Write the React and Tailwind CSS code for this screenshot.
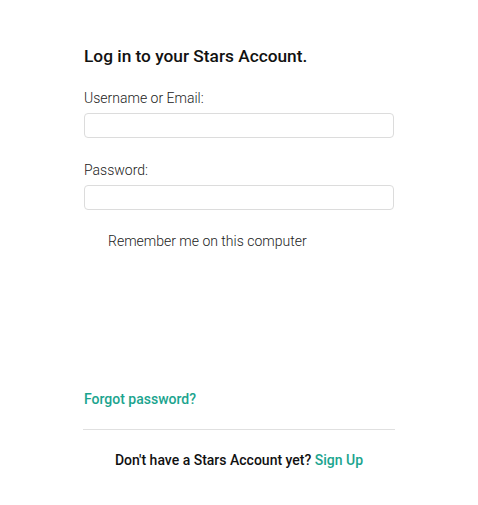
export default function App() {
  return (
    <div className="min-h-[505px] w-[478px] bg-white" style={{ fontFamily: "Roboto, 'Liberation Sans', sans-serif" }}>
      <div className="ml-[83px] w-[312px] pt-[44px]">
        <h1 className="pl-px text-[17.3px] font-medium leading-[24px] text-[#111]">Log in to your Stars Account.</h1>
        <div className="mt-[20px] pl-px">
          <label className="block text-[14px] font-light leading-[20px] text-[#222]">Username or Email:</label>
          <input type="text" className="mt-[5px] block h-[25px] w-[310px] rounded-[4px] border border-[#dcdcdc] bg-white outline-none" />
        </div>
        <div className="mt-[22px] pl-px">
          <label className="block text-[14px] font-light leading-[20px] text-[#222]">Password:</label>
          <input type="password" className="mt-[5px] block h-[25px] w-[310px] rounded-[4px] border border-[#dcdcdc] bg-white outline-none" />
        </div>
        <div className="mt-[21px] pl-[25px] text-[14px] font-light leading-[20px] text-[#222]">Remember me on this computer</div>
        <a href="#" className="mt-[138px] block pl-px text-[14px] font-medium leading-[20px] text-[#1ba48e]">Forgot password?</a>
        <div className="mt-[20px] h-px bg-[#e0e0e0]" />
        <p className="mt-[20px] text-center text-[14px] font-medium leading-[20px] text-[#111]">
          Don't have a Stars Account yet? <a href="#" className="text-[#1ba48e]">Sign Up</a>
        </p>
      </div>
    </div>
  );
}
